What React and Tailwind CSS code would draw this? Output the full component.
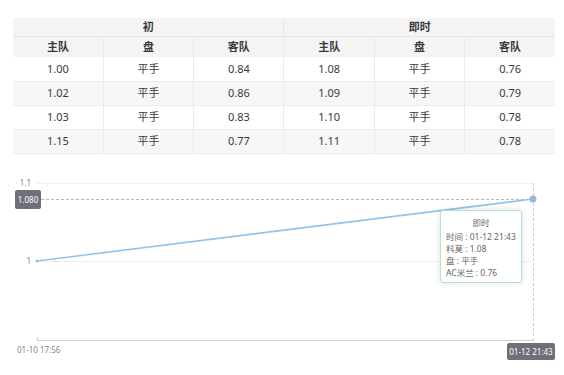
const font = { fontFamily: '"Noto Sans", "Noto Sans CJK SC", sans-serif' }

const early = [
    ["1.00", "平手", "0.84"],
    ["1.02", "平手", "0.86"],
    ["1.03", "平手", "0.83"],
    ["1.15", "平手", "0.77"],
]
const live = [
    ["1.08", "平手", "0.76"],
    ["1.09", "平手", "0.79"],
    ["1.10", "平手", "0.78"],
    ["1.11", "平手", "0.78"],
]

function OddsTable() {
    const heads = ["主队", "盘", "客队", "主队", "盘", "客队"]
    return (
        <table className="ml-[13px] mt-[18px] w-[542px] table-fixed border-collapse text-[11px] text-[#3a3a3a]">
            <thead>
                <tr className="h-[18px] bg-[#f4f4f4]">
                    <th colSpan={3} className="border-r border-b border-[#e6e6e6] font-bold">初</th>
                    <th colSpan={3} className="border-b border-[#e6e6e6] font-bold">即时</th>
                </tr>
                <tr className="h-[21px] bg-[#f4f4f4]">
                    {heads.map((h, i) => (
                        <th key={i} className={`font-bold ${i < 5 ? "border-r border-[#e9e9e9]" : ""}`}>{h}</th>
                    ))}
                </tr>
            </thead>
            <tbody>
                {early.map((row, r) => {
                    const cells = [...row, ...live[r]]
                    return (
                        <tr key={r} className={`h-[24px] border-b border-[#ececec] ${r % 2 ? "bg-[#f7f7f7]" : "bg-white"}`}>
                            {cells.map((c, i) => (
                                <td key={i} className={`text-center ${i < 5 ? "border-r border-[#ececec]" : ""}`}>{c}</td>
                            ))}
                        </tr>
                    )
                })}
            </tbody>
        </table>
    )
}

function Chart() {
    return (
        <div className="relative mt-[6px] h-[215px] w-[564px]">
            <svg width="564" height="215" fontSize="8" fontFamily='"Noto Sans", "Noto Sans CJK SC", sans-serif'>
                <line x1="37" y1="23.5" x2="533" y2="23.5" stroke="#eeeeee" />
                <line x1="37" y1="101.5" x2="533" y2="101.5" stroke="#eeeeee" />
                <line x1="41" y1="39.5" x2="533" y2="39.5" stroke="#b8b8b8" strokeDasharray="3 2" />
                <line x1="533.5" y1="23" x2="533.5" y2="184" stroke="#cfcfcf" strokeDasharray="3 2" />
                <line x1="37" y1="180.5" x2="533" y2="180.5" stroke="#d0d0d0" />
                <line x1="37.5" y1="177" x2="37.5" y2="181" stroke="#d0d0d0" />
                <line x1="37" y1="101" x2="533" y2="39" stroke="#8cc4ef" strokeWidth="1.5" />
                <circle cx="37" cy="101" r="1.5" fill="#8cc4ef" />
                <circle cx="533" cy="39" r="3.5" fill="#94b8e0" />

                <text x="31" y="26" textAnchor="end" fill="#888">1.1</text>
                <text x="31" y="104" textAnchor="end" fill="#888">1</text>
                <text x="17" y="193" fill="#888">01-10 17:56</text>

                <rect x="15" y="30" width="26" height="19" rx="2" fill="#6e7079" />
                <text x="28" y="42.5" textAnchor="middle" fill="#fff">1.080</text>
                <rect x="507" y="183" width="48" height="17" rx="2" fill="#6e7079" />
                <text x="531" y="194.5" textAnchor="middle" fill="#fff">01-12 21:43</text>
            </svg>
            <div className="absolute left-[440px] top-[50px] flex h-[73px] w-[82px] flex-col whitespace-nowrap rounded-[3px] border border-[#b6e5c4] bg-white px-[5px] pt-[6px] text-[8.5px] leading-[12px] text-[#666] shadow-[0_0_6px_rgba(0,0,0,0.12)]">
                <div className="mb-[2px] text-center">即时</div>
                <div>时间 : 01-12 21:43</div>
                <div>科莫 : 1.08</div>
                <div>盘 : 平手</div>
                <div>AC米兰 : 0.76</div>
            </div>
        </div>
    )
}

export default function App() {
    return (
        <div className="h-[375px] w-[564px] overflow-hidden bg-white" style={font}>
            <OddsTable />
            <Chart />
        </div>
    )
}
